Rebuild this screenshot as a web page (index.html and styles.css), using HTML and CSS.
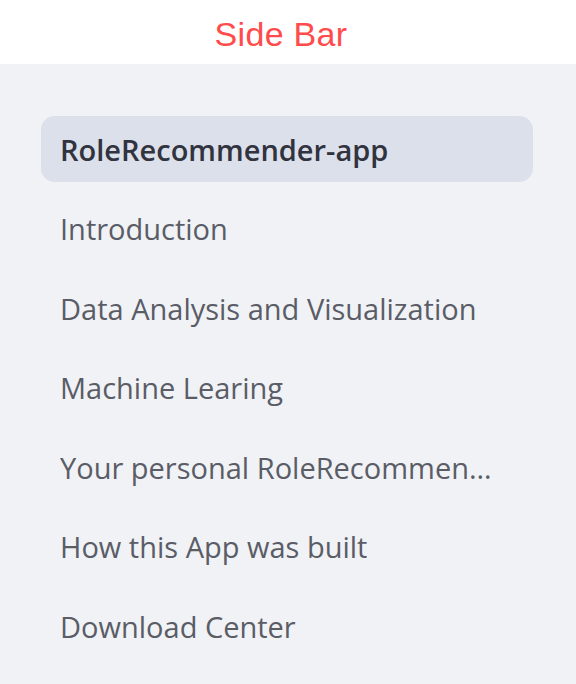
FILE: index.html
```html
<!DOCTYPE html>
<html lang="en">
<head>
<meta charset="utf-8">
<title>Side Bar</title>
<link rel="stylesheet" href="styles.css">
</head>
<body>
<header class="title">Side Bar</header>
<nav class="sidebar">
  <ul class="nav">
    <li class="item active"><span class="label">RoleRecommender-app</span></li>
    <li class="item"><span class="label">Introduction</span></li>
    <li class="item"><span class="label">Data Analysis and Visualization</span></li>
    <li class="item"><span class="label">Machine Learing</span></li>
    <li class="item"><span class="label">Your personal RoleRecommender-app</span></li>
    <li class="item"><span class="label">How this App was built</span></li>
    <li class="item"><span class="label">Download Center</span></li>
  </ul>
</nav>
</body>
</html>
```
FILE: styles.css
```css
html, body {
  margin: 0;
  padding: 0;
  height: 100%;
}
body {
  background: #f0f2f6;
  display: flex;
  flex-direction: column;
}
.title {
  height: 64px;
  box-sizing: border-box;
  padding: 5px 14px 0 0;
  background: #ffffff;
  color: #ff4b4b;
  font-family: "Liberation Sans", Arial, sans-serif;
  font-size: 34px;
  letter-spacing: 0.3px;
  display: flex;
  align-items: center;
  justify-content: center;
  flex: none;
}
.sidebar {
  flex: 1;
  background: #f0f2f6;
  padding: 52px 43px 0 41px;
}
.nav {
  list-style: none;
  margin: 0;
  padding: 0;
  display: flex;
  flex-direction: column;
  gap: 13.6px;
}
.item {
  height: 66px;
  border-radius: 14px;
  display: flex;
  align-items: center;
  padding: 0 24px 0 19px;
  font-family: "Open Sans", "Noto Sans", sans-serif;
  font-size: 29px;
  color: #5a5c66;
  min-width: 0;
}
.label {
  white-space: nowrap;
  overflow: hidden;
  text-overflow: ellipsis;
  min-width: 0;
}
.item.active {
  background: #dce0ea;
  color: #31333f;
  font-weight: 600;
}
```
